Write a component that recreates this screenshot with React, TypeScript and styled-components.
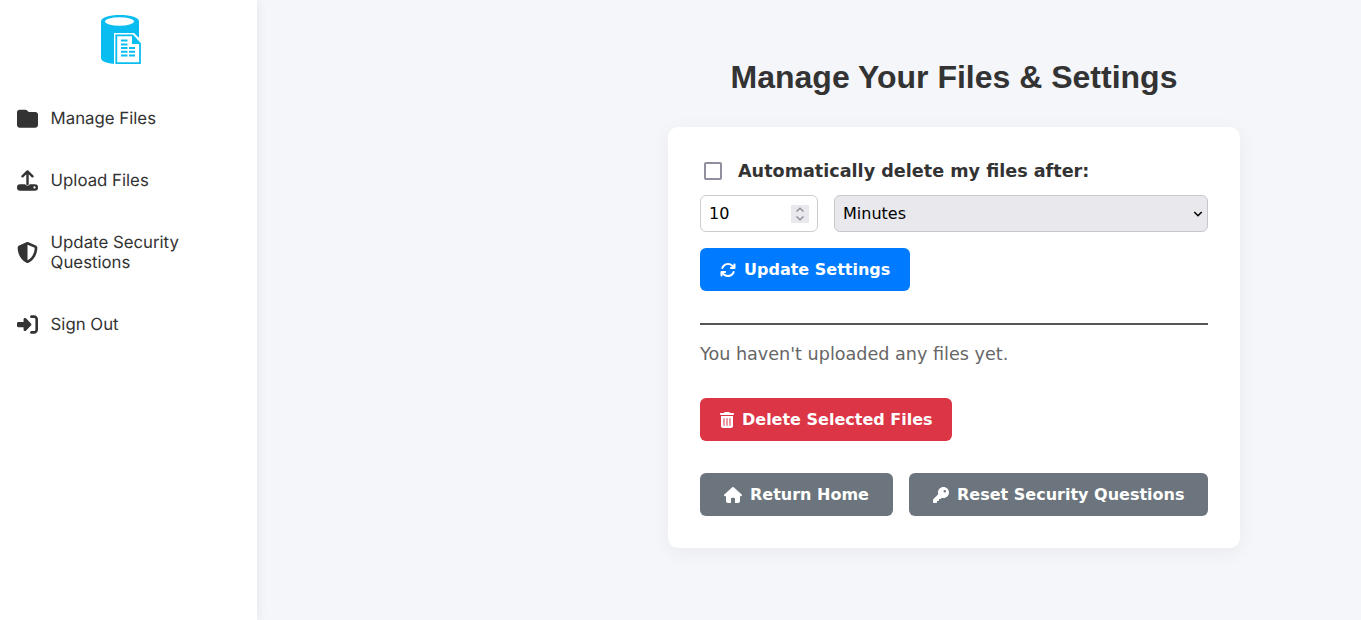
import React from 'react';
import styled, { createGlobalStyle, css } from 'styled-components';
import { FaShieldHalved, FaRightToBracket, FaArrowsRotate, FaTrashCan, FaKey } from 'react-icons/fa6';

const GlobalStyle = createGlobalStyle`
  *, *::before, *::after { box-sizing: border-box; }
  body {
    margin: 0;
    background: #f4f6fa;
    color: #333;
    font-family: "DejaVu Sans", sans-serif;
    font-size: 16px;
  }
`;

const Page = styled.div`
  display: flex;
  height: 620px;
  overflow: hidden;
`;

const Sidebar = styled.nav`
  flex: none;
  width: 257px;
  background: #fff;
  box-shadow: 2px 0 10px rgba(0, 0, 0, 0.06);
  font-family: Inter, sans-serif;
  text-rendering: geometricPrecision;
`;

const Logo = styled.svg`
  display: block;
  width: 42px;
  height: 50px;
  margin: 15px 0 0 100px;
`;

const NavList = styled.ul`
  list-style: none;
  margin: 23px 0 0;
  padding: 0;
`;

const NavItem = styled.li`
  display: flex;
  align-items: center;
  gap: 12.6px;
  padding: 21px 50px 21px 17px;
  font-size: 16.8px;
  line-height: 20px;

  svg {
    flex: none;
    width: 21px;
    height: 21px;
    margin: -1px 0 -0.4px;
  }
`;

const Main = styled.main`
  flex: 1;
  display: flex;
  flex-direction: column;
  align-items: flex-end;
  padding: 59px 121px 0 0;
`;

const Column = styled.div`
  width: 572px;
`;

const Title = styled.h1`
  margin: 0 0 31px;
  font: bold 32px/37px "Liberation Sans", sans-serif;
  text-align: center;
`;

const Card = styled.section`
  height: 421px;
  padding: 32px;
  border-radius: 10px;
  background: #fff;
  box-shadow: 0 4px 20px rgba(0, 0, 0, 0.05);
`;

const CheckRow = styled.label`
  display: flex;
  align-items: center;
  gap: 16px;
  height: 24px;
  padding-left: 4px;
  font-size: 17.6px;
  font-weight: bold;
`;

const Checkbox = styled.input`
  appearance: none;
  width: 18px;
  height: 18px;
  margin: 0;
  border: 2px solid #8f8f9d;
  border-radius: 2px;
  background: #fff;
`;

const Fields = styled.div`
  display: flex;
  gap: 16px;
  margin: 12px 0 16px;
`;

const fieldStyle = css`
  display: flex;
  align-items: center;
  justify-content: space-between;
  height: 37px;
  border: 1px solid #ccc;
  border-radius: 6px;
  color: #000;
`;

const NumberField = styled.div`
  ${fieldStyle}
  width: 118px;
  padding: 0 8px;
`;

const Spinner = styled.span`
  display: flex;
  width: 18px;
  height: 18px;
  background: #e9e9ed;
`;

const SelectField = styled.div`
  ${fieldStyle}
  flex: 1;
  padding: 0 4px 0 8px;
  background: #e9e9ed;
  border-color: #c8c8cc;
`;

const tones = { primary: '#007bff', danger: '#dc3545', neutral: '#6c757d' };

const Button = styled.button<{ $tone: keyof typeof tones; $width: number }>`
  display: flex;
  align-items: center;
  justify-content: flex-start;
  gap: 8px;
  width: ${p => p.$width}px;
  height: 43px;
  padding: 0 ${p => (p.$tone === 'neutral' ? 24 : 20)}px;
  border: 0;
  border-radius: 6px;
  background: ${p => tones[p.$tone]};
  color: #fff;
  font: bold 16px "DejaVu Sans", sans-serif;
  white-space: nowrap;

  svg {
    flex: none;
    height: 16px;
    width: ${p => (p.$tone === 'danger' ? '14px' : 'auto')};
  }
`;

const Divider = styled.hr`
  height: 2px;
  margin: 32px 0 18px;
  border: 0;
  background: #555;
`;

const EmptyText = styled.p`
  margin: 0 0 32px;
  color: #666;
  font-size: 17.6px;
  line-height: 23px;
`;

const Actions = styled.div`
  display: flex;
  gap: 16px;
  margin-top: 32px;
`;

const FolderIcon = () => (
  <svg viewBox="0 0 512 512" fill="currentColor">
    <path d="M64 480h384c35 0 64-29 64-64V160c0-35-29-64-64-64H299c-7 0-14-2-20-6l-38-34c-11-9-24-16-38-16H64C29 40 0 69 0 104v312c0 35 29 64 64 64Z" />
  </svg>
);

const UploadIcon = () => (
  <svg viewBox="0 0 21 21" fill="none" stroke="currentColor">
    <path d="M10.500 14V2M5.500 6.300l5-4.900 5 4.900" strokeWidth="2.400" strokeLinecap="round" strokeLinejoin="round" />
    <path d="M3 14.300h5.100a2.700 2.700 0 0 0 4.800 0H18a3 3 0 0 1 3 3v.400a3 3 0 0 1-3 3H3a3 3 0 0 1-3-3v-.400a3 3 0 0 1 3-3Z" fill="currentColor" stroke="none" />
    <circle cx="17.500" cy="17.400" r="1.100" fill="#fff" stroke="none" />
  </svg>
);

const HomeIcon = () => (
  <svg width="18" height="16" viewBox="0 0 18 16" fill="currentColor">
    <path d="M8.300.300a1 1 0 0 1 1.400 0l8 7.300c.600.600.200 1.600-.700 1.600h-1v4.800a2 2 0 0 1-2 2h-3v-4a1.200 1.200 0 0 0-1.200-1.200H8.200A1.200 1.200 0 0 0 7 12v4H4a2 2 0 0 1-2-2V9.200H1C.100 9.200-.300 8.200.300 7.600Z" />
  </svg>
);

export default function App() {
  return (
    <Page>
      <GlobalStyle />
      <Sidebar>
        <Logo viewBox="0 0 42 50">
          <path d="M1 6.500C1 2.500 9 0 20 0s19 2.500 19 6.500V44c0 3-8 5-19 5S1 47 1 43Z" fill="#09bdf0" />
          <ellipse cx="19.500" cy="6.500" rx="14.500" ry="4.200" fill="#fff" />
          <path d="M14 18h20l8 8v24H14Z" fill="#fff" />
          <path d="M16.300 20.300h16.200l7.500 8.200V48.200H16.300Z" fill="#fff" stroke="#09bdf0" strokeWidth="1.800" />
          <path d="M32 19.500v9.500h9Z" fill="#09bdf0" />
          <path d="M21 25.500h6.500M21 29.500h6.500M21 33h6.500M21 36.800h6.500M21 40.500h6.500M29 33h6M29 36.800h6M29 40.500h6" stroke="#09bdf0" strokeWidth="1.900" />
        </Logo>
        <NavList>
          <NavItem><FolderIcon />Manage Files</NavItem>
          <NavItem><UploadIcon />Upload Files</NavItem>
          <NavItem><FaShieldHalved />Update Security Questions</NavItem>
          <NavItem><FaRightToBracket />Sign Out</NavItem>
        </NavList>
      </Sidebar>
      <Main>
        <Column>
          <Title>Manage Your Files &amp; Settings</Title>
          <Card>
            <CheckRow><Checkbox type="checkbox" />Automatically delete my files after:</CheckRow>
            <Fields>
              <NumberField>
                10
                <Spinner>
                  <svg width="18" height="18" fill="none" stroke="#8f8f9d" strokeWidth="1.500">
                    <path d="m5.500 6.500 3.500-3.300 3.500 3.300M5.500 11.500 9 14.800l3.500-3.300" />
                  </svg>
                </Spinner>
              </NumberField>
              <SelectField>
                Minutes
                <svg width="10" height="8" fill="none" stroke="#000" strokeWidth="1.600"><path d="m1.300 2 3.700 3.700L8.700 2" /></svg>
              </SelectField>
            </Fields>
            <Button $tone="primary" $width={210}><FaArrowsRotate />Update Settings</Button>
            <Divider />
            <EmptyText>You haven't uploaded any files yet.</EmptyText>
            <Button $tone="danger" $width={252}><FaTrashCan />Delete Selected Files</Button>
            <Actions>
              <Button $tone="neutral" $width={193}><HomeIcon />Return Home</Button>
              <Button $tone="neutral" $width={299}><FaKey />Reset Security Questions</Button>
            </Actions>
          </Card>
        </Column>
      </Main>
    </Page>
  );
}
